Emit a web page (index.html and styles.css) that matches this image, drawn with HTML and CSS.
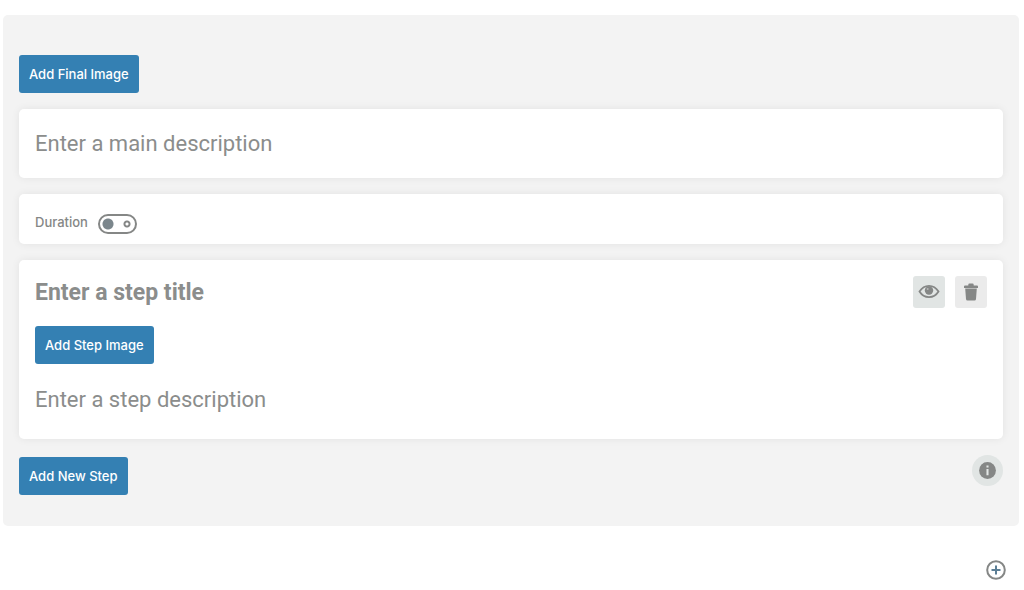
FILE: index.html
```html
<!DOCTYPE html>
<html lang="en">
<head>
    <meta charset="UTF-8">
    <meta name="viewport" content="width=device-width, initial-scale=1.0">
    <title>How-to block</title>
    <link rel="stylesheet" href="styles.css">
</head>
<body>

    <!-- How-to editor -->
    <main class="howto">
        <button type="button" class="btn">Add Final Image</button>

        <div class="card card-description">
            <input type="text" class="field" placeholder="Enter a main description" aria-label="Main description">
        </div>

        <div class="card card-duration">
            <label for="duration">Duration</label>
            <input type="checkbox" id="duration" class="toggle">
        </div>

        <!-- Step -->
        <section class="card card-step">
            <div class="step-header">
                <input type="text" class="field field-title" placeholder="Enter a step title" aria-label="Step title">
                <div class="step-actions">
                    <button type="button" class="icon-btn icon-btn-active" aria-label="Show step">
                        <svg width="22" height="16" viewBox="0 0 22 16">
                            <path d="M1.500 7.500C4 3.600 7.200 1.900 11 1.900S18 3.600 20.500 7.500C18 11.600 14.800 13.100 11 13.100S4 11.600 1.500 7.500z" fill="none" stroke="currentColor" stroke-width="1.800"/>
                            <circle cx="11" cy="6.500" r="4.200" fill="currentColor"/>
                            <circle cx="9.700" cy="4.900" r="1" fill="#b5b8b7"/>
                        </svg>
                    </button>
                    <button type="button" class="icon-btn" aria-label="Delete step">
                        <svg width="16" height="20" viewBox="0 0 16 20" fill="currentColor">
                            <path d="M5.300 3.500V2.700Q5.300 1.500 6.500 1.500h3Q10.700 1.500 10.700 2.700V3.500H14q1 0 1 1v1.500H1V4.500q0-1 1-1z"/>
                            <path d="M2.200 6.500h11.600l-.8 10.500q-.1 1.500-1.500 1.500h-7Q3.100 18.500 3 17z"/>
                        </svg>
                    </button>
                </div>
            </div>
            <button type="button" class="btn">Add Step Image</button>
            <input type="text" class="field" placeholder="Enter a step description" aria-label="Step description">
        </section>

        <div class="howto-footer">
            <button type="button" class="btn">Add New Step</button>
            <button type="button" class="info-btn" aria-label="Information">
                <svg width="17" height="17" viewBox="0 0 18 18">
                    <circle cx="9" cy="9" r="8.900" fill="currentColor"/>
                    <path d="M7.900 3.600h2.200v2.200H7.900zM7.900 7.300h2.200v6.700H7.900z" fill="#e3e7e6"/>
                </svg>
            </button>
        </div>
    </main>

    <!-- Block inserter -->
    <div class="inserter">
        <button type="button" class="add-btn" aria-label="Add block">
            <svg width="20" height="20" viewBox="0 0 20 20" fill="none" stroke="currentColor">
                <circle cx="10" cy="10" r="8.800" stroke-width="2"/>
                <path class="plus" d="M10 5.500v9M5.500 10h9" stroke-width="2"/>
            </svg>
        </button>
    </div>

</body>
</html>
```

FILE: styles.css
```css
* {
    box-sizing: border-box;
}

body {
    font-family: Inter, "Liberation Sans", sans-serif;
    font-size: 13px;
    color: #858786;
    background-color: #fff;
    margin: 0;
    padding: 15px 5px 0 3px;
}

button {
    font-family: inherit;
    border: none;
    padding: 0;
    cursor: pointer;
}

svg {
    display: block;
}

/* Main panel */
.howto {
    background-color: #f3f3f3;
    border-radius: 5px;
    padding: 40px 16px 31px;
}

/* Blue buttons */
.btn {
    display: block;
    height: 38px;
    padding: 0 10px;
    background-color: #3480b3;
    color: #fff;
    font-size: 13px;
    font-weight: 500;
    border-radius: 3px;
}

/* White cards */
.card {
    background-color: #fff;
    border-radius: 5px;
    box-shadow: 0 0 8px rgba(0, 0, 0, 0.07);
    margin-top: 16px;
    padding: 16px;
}

.card-description {
    padding: 18px 16px 19px;
}

.card-duration {
    display: flex;
    align-items: flex-end;
    gap: 10px;
    height: 50px;
    padding: 10px 16px;
    font-weight: 500;
}

.card-duration label {
    line-height: 24px;
}

/* Text fields */
.field {
    display: block;
    width: 100%;
    height: 32px;
    padding: 0;
    border: none;
    background: none;
    outline: none;
    font-family: Roboto, "Liberation Sans", sans-serif;
    font-size: 22px;
    color: #333;
}

.field::placeholder {
    color: #8b8d8c;
    opacity: 1;
}

.field-title {
    font-size: 23px;
    font-weight: 700;
}

/* Duration switch */
.toggle {
    appearance: none;
    width: 39px;
    height: 20px;
    margin: 0;
    border: 2px solid #858786;
    border-radius: 10px;
    background:
        radial-gradient(circle at 8px 8px, #7b868c 5px, transparent 6px),
        radial-gradient(circle at 27px 8px, transparent 1px, #858786 2px, #858786 3px, transparent 4px);
    cursor: pointer;
}

/* Step */
.step-header {
    display: flex;
    gap: 16px;
    margin-bottom: 18px;
}

.step-actions {
    display: flex;
    gap: 10px;
}

.card-step > .field {
    margin: 19px 0 8px;
}

.icon-btn {
    display: flex;
    align-items: center;
    justify-content: center;
    width: 32px;
    height: 32px;
    background-color: #ebebeb;
    color: #858786;
    border-radius: 3px;
}

.icon-btn-active {
    background-color: #e1e5e4;
}

/* Bottom row */
.howto-footer {
    display: flex;
    justify-content: space-between;
    align-items: flex-end;
    margin-top: 16px;
}

.info-btn {
    display: flex;
    align-items: center;
    justify-content: center;
    align-self: flex-start;
    width: 31px;
    height: 31px;
    background-color: #e1e5e4;
    color: #858786;
    border-radius: 50%;
}

.howto-footer .btn {
    margin-top: 2px;
}

/* Inserter */
.inserter {
    display: flex;
    justify-content: flex-end;
    padding: 34px 13px 10px;
}

.add-btn {
    background: none;
    color: #858786;
}

.plus {
    stroke: #5b7e95;
}
```
